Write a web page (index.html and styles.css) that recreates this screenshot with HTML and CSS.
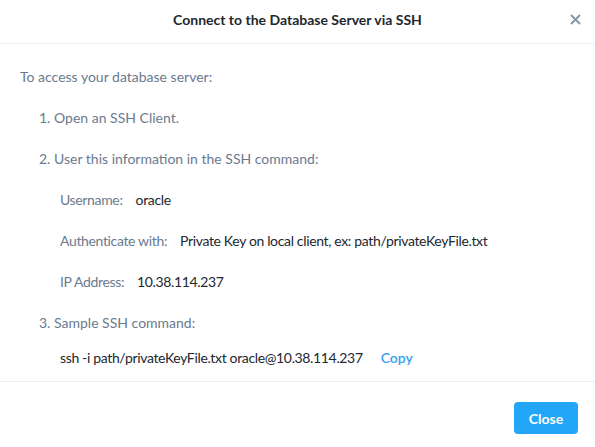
FILE: index.html
```html
<!DOCTYPE html>
<html>
<head>
<meta charset="utf-8">
<link rel="stylesheet" href="styles.css">
</head>
<body>
<div class="modal">
  <div class="header">
    <div class="title">Connect to the Database Server via SSH</div>
    <button class="x" aria-label="Close">
      <svg width="11" height="11" viewBox="0 0 11 11"><path d="M1 1L10 10M10 1L1 10" stroke="#8796ab" stroke-width="2" stroke-linecap="butt"/></svg>
    </button>
  </div>
  <div class="body">
    <div class="line intro">To access your database server:</div>
    <div class="line step">1. Open an SSH Client.</div>
    <div class="line step">2. User this information in the SSH command:</div>
    <div class="line field"><span class="label">Username:</span><span class="value">oracle</span></div>
    <div class="line field"><span class="label">Authenticate with:</span><span class="value">Private Key on local client, ex: path/privateKeyFile.txt</span></div>
    <div class="line field"><span class="label">IP Address:</span><span class="value">10.38.114.237</span></div>
    <div class="line step last">3. Sample SSH command:</div>
    <div class="line cmd"><span class="value">ssh -i path/privateKeyFile.txt oracle@10.38.114.237</span><a class="copy">Copy</a></div>
  </div>
  <div class="footer">
    <button class="btn">Close</button>
  </div>
</div>
</body>
</html>
```
FILE: styles.css
```css
* { box-sizing: border-box; }
html, body { margin: 0; padding: 0; background: #fff; }
body { font-family: Lato, "Liberation Sans", sans-serif; font-size: 14px; color: #6b7a8e; }
.modal { width: 595px; height: 447px; display: flex; flex-direction: column; }
.header { height: 44px; border-bottom: 1px solid #eceef1; display: flex; align-items: center; justify-content: center; position: relative; }
.title { color: #22272e; font-weight: 700; font-size: 14px; margin-top: -5px; }
.x { position: absolute; right: 14px; top: 14px; background: none; border: 0; padding: 0; width: 11px; height: 11px; display: flex; }
.body { flex: 1; padding: 24px 20px 0; border-bottom: 1px solid #eceef1; }
.line { height: 41px; line-height: 18px; white-space: nowrap; }
.step { padding-left: 19px; }
.field, .cmd { padding-left: 40px; letter-spacing: -0.35px; }
.label { margin-right: 13px; }
.value { color: #22272e; }
.last { height: 35px; }
.cmd { height: 24px; }
.copy { color: #35a2f2; margin-left: 18px; font-weight: 600; letter-spacing: 0; }
.footer { height: 65px; display: flex; justify-content: flex-end; padding: 20px 17px 0 0; }
.btn { width: 64px; height: 32px; background: #22a6f7; color: #fff; border: 0; border-radius: 4px; font-family: inherit; font-weight: 700; font-size: 14px; }
```
